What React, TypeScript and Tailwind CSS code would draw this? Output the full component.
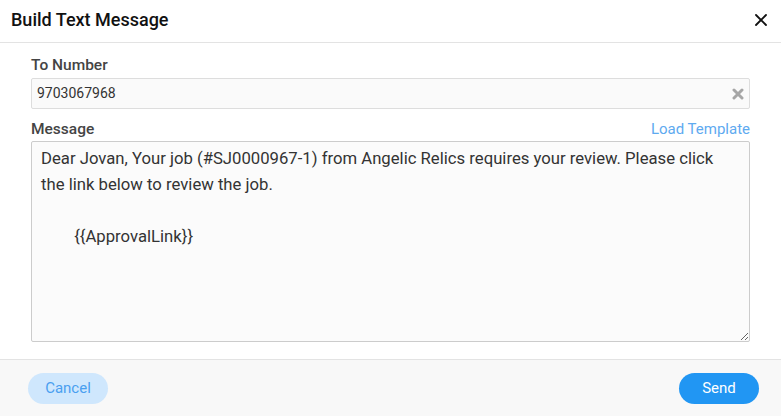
import { X } from 'lucide-react'

export default function App() {
  return (
    <div className="w-[781px] h-[416px] bg-white flex flex-col font-['Roboto',sans-serif] overflow-hidden">
      <div className="h-[43px] border-b border-[#e3e3e3] flex items-center justify-between pl-[11px] pr-[10px] pb-[4px]">
        <h1 className="text-[18px] font-medium text-[#111]">Build Text Message</h1>
        <X className="w-[20px] h-[20px] text-[#111] mt-[2px]" strokeWidth={2.2} />
      </div>

      <div className="flex-1 px-[31px] pt-[12px]">
        <label className="block text-[15.5px] font-medium text-[#444] leading-[20px]">To Number</label>
        <div className="mt-[3px] h-[31px] border border-[#ddd] bg-[#fafafa] rounded-[2px] flex items-center justify-between pl-[5px] pr-[4px]">
          <span className="text-[14px] text-[#333]">9703067968</span>
          <svg width="12" height="12" viewBox="0 0 12 12" className="mr-[1px]">
            <path d="M2 2 L10 10 M10 2 L2 10" stroke="#a6a6a6" strokeWidth="3" strokeLinecap="round" />
          </svg>
        </div>

        <div className="mt-[10px] flex items-end justify-between leading-[20px]">
          <label className="text-[15.5px] font-medium text-[#444]">Message</label>
          <span className="text-[15px] text-[#5eaaf0]">Load Template</span>
        </div>
        <textarea
          className="mt-[2px] block w-full h-[201px] border border-[#ccc] bg-[#fbfbfb] rounded-[2px] px-[9px] py-[4px] text-[16.7px] leading-[26px] text-[#333] outline-none font-['Roboto',sans-serif] [tab-size:8]"
          defaultValue={'Dear Jovan, Your job (#SJ0000967-1) from Angelic Relics requires your review. Please click the link below to review the job.\n\n\t{{ApprovalLink}}'}
        />
      </div>

      <div className="h-[57px] border-t border-[#e3e3e3] bg-[#f8f8f8] flex items-center justify-between px-[28px] pr-[22px]">
        <button className="w-[80px] h-[31px] rounded-full bg-[#cfe7fd] text-[15px] text-[#4a9ff0]">Cancel</button>
        <button className="w-[80px] h-[31px] rounded-full bg-[#2196f3] text-[15px] text-white">Send</button>
      </div>
    </div>
  )
}
